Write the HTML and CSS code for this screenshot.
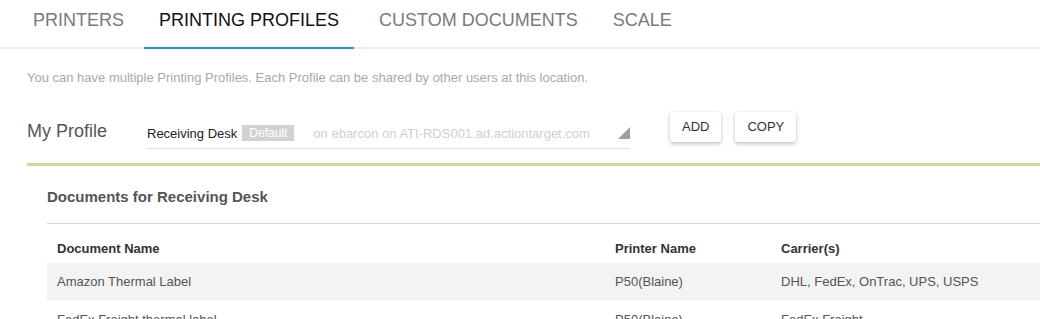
FILE: index.html
```html
<!DOCTYPE html>
<html>
<head>
<meta charset="utf-8">
<link rel="stylesheet" href="styles.css">
</head>
<body>
<nav class="tabs">
  <div class="tab">PRINTERS</div>
  <div class="tab active">PRINTING PROFILES</div>
  <div class="tab">CUSTOM DOCUMENTS</div>
  <div class="tab">SCALE</div>
</nav>
<main class="content">
  <p class="intro">You can have multiple Printing Profiles. Each Profile can be shared by other users at this location.</p>
  <div class="profile-row">
    <div class="profile-label">My Profile</div>
    <div class="select">
      <span class="sel-name">Receiving Desk</span><span class="badge">Default</span><span class="sel-meta">on ebarcon on ATI-RDS001.ad.actiontarget.com</span>
      <svg class="caret" width="12" height="12" viewBox="0 0 12 12"><polygon points="12,0 12,12 0,12" fill="#9e9e9e"/></svg>
    </div>
    <div class="buttons">
      <button class="btn">ADD</button>
      <button class="btn">COPY</button>
    </div>
  </div>
  <section class="docs">
    <h2 class="docs-title">Documents for Receiving Desk</h2>
    <div class="grid">
      <div class="row head">
        <div class="cell">Document Name</div>
        <div class="cell">Printer Name</div>
        <div class="cell">Carrier(s)</div>
      </div>
      <div class="row shaded">
        <div class="cell">Amazon Thermal Label</div>
        <div class="cell">P50(Blaine)</div>
        <div class="cell">DHL, FedEx, OnTrac, UPS, USPS</div>
      </div>
      <div class="row">
        <div class="cell">FedEx Freight thermal label</div>
        <div class="cell">P50(Blaine)</div>
        <div class="cell">FedEx Freight</div>
      </div>
    </div>
  </section>
</main>
</body>
</html>
```

FILE: styles.css
```css
html, body {
  margin: 0;
  padding: 0;
  background: #fff;
  font-family: "Liberation Sans", Arial, sans-serif;
  overflow: hidden;
}

.tabs {
  display: flex;
  gap: 5px;
  padding-left: 18px;
  height: 47px;
  border-bottom: 2px solid #eeeeee;
}

.tab {
  padding: 10px 15px 0;
  font-size: 18px;
  line-height: 20px;
  color: #7a7a7a;
  height: 37px;
}

.tab.active {
  color: #111;
  border-bottom: 2px solid #2196f3;
}

.tab.active + .tab {
  margin-left: 5px;
}

.content {
  padding-left: 27px;
}

.intro {
  margin: 21px 0 0;
  font-size: 13px;
  line-height: 15px;
  color: #a9a9a9;
}

.profile-row {
  display: flex;
  align-items: flex-start;
  margin-top: 27px;
  height: 51px;
}

.profile-label {
  width: 120px;
  margin-top: 9px;
  font-size: 18px;
  line-height: 21px;
  color: #555;
}

.select {
  position: relative;
  width: 483px;
  margin-top: 13px;
  padding-bottom: 6px;
  border-bottom: 1px solid #dddddd;
  font-size: 13px;
  line-height: 16px;
  white-space: nowrap;
}

.sel-name {
  color: #222;
}

.badge {
  display: inline-block;
  margin-left: 5px;
  padding: 0 7px;
  background: #d2d2d2;
  color: #fff;
  font-size: 12px;
  line-height: 16px;
  vertical-align: 1px;
}

.sel-meta {
  margin-left: 19px;
  color: #cfcfcf;
}

.caret {
  position: absolute;
  right: 0;
  top: 2px;
}

.buttons {
  display: flex;
  gap: 14px;
  margin-left: 40px;
}

.btn {
  height: 30px;
  padding: 0 12px;
  border: none;
  border-radius: 2px;
  background: #fff;
  box-shadow: 0 2px 4px rgba(0, 0, 0, 0.22), 0 0 2px rgba(0, 0, 0, 0.08);
  font-family: "Liberation Sans", Arial, sans-serif;
  font-size: 13px;
  color: #333;
  line-height: 30px;
}

.docs {
  border-top: 3px solid #c5dd9c;
  padding-left: 20px;
}

.docs-title {
  margin: 0;
  padding: 22px 0 18px;
  font-size: 15px;
  line-height: 17px;
  font-weight: bold;
  color: #555;
  border-bottom: 1px solid #d6d6d6;
}

.row {
  display: grid;
  grid-template-columns: 558px 166px 1fr;
}

.cell {
  padding: 11px 10px 12px;
  font-size: 13px;
  line-height: 15px;
  color: #555;
  white-space: nowrap;
}

.row.head .cell {
  padding: 17px 10px 7px;
  font-weight: bold;
  color: #333;
}

.row.shaded {
  background: #f3f3f3;
}
```
